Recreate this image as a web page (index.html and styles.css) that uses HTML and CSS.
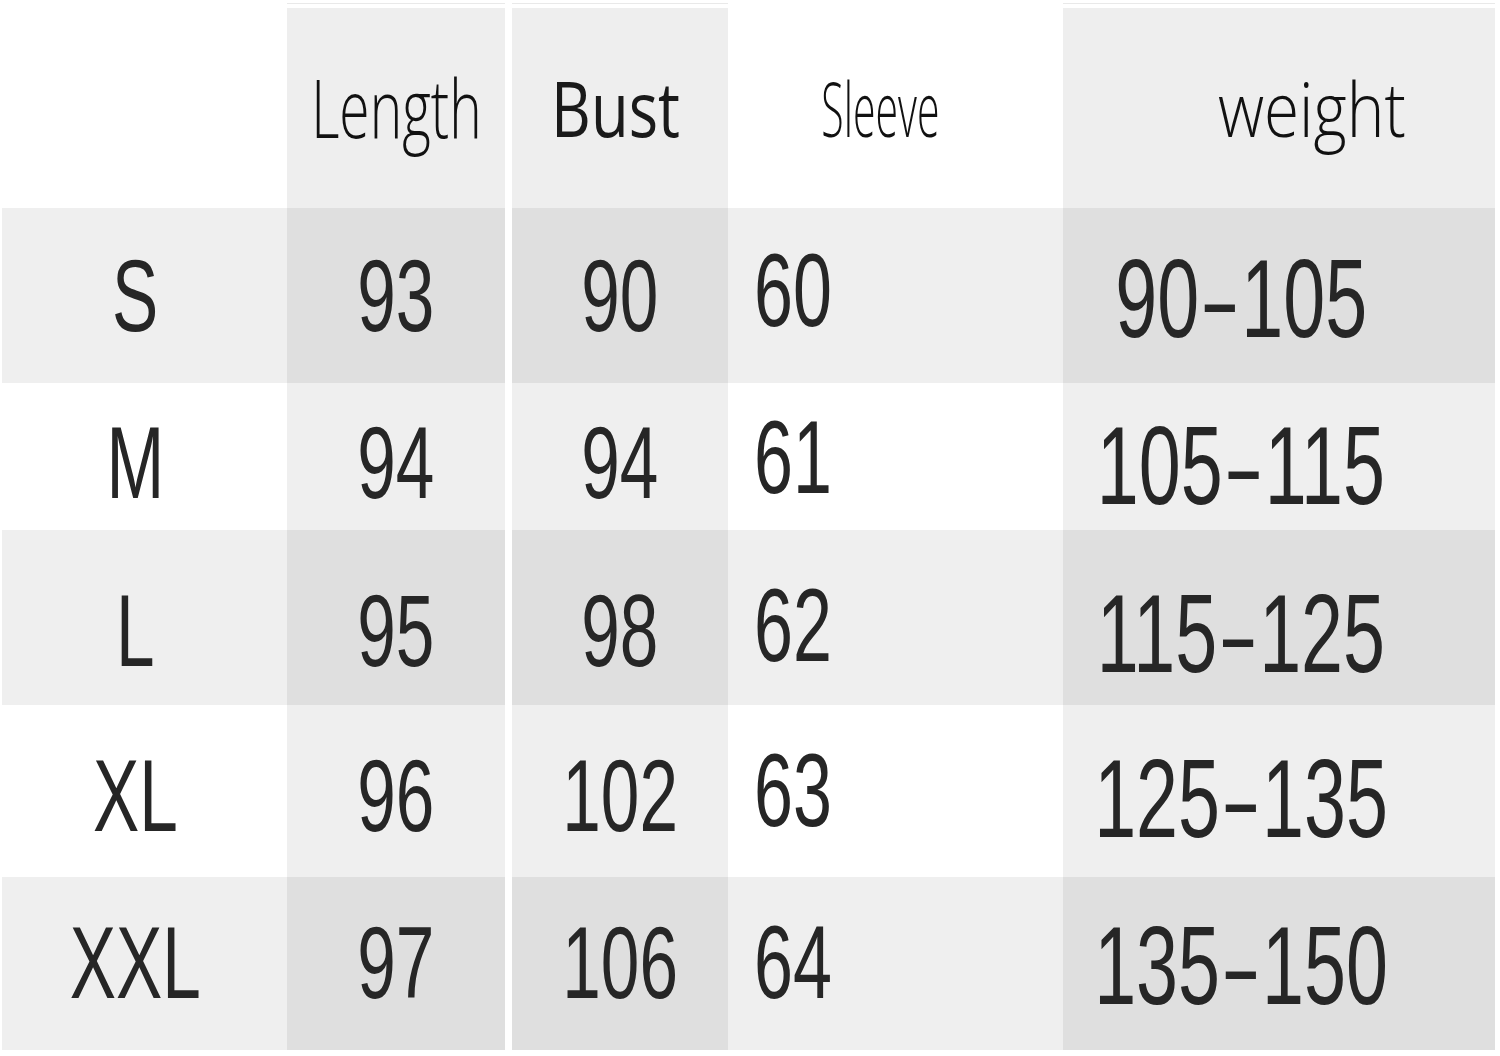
FILE: index.html
```html
<!DOCTYPE html>
<html lang="en">
<head>
<meta charset="utf-8">
<title>Size chart</title>
<link rel="stylesheet" href="styles.css">
</head>
<body>
<div class="chart">
  <div class="row head">
    <div class="cell c-size"></div>
    <div class="cell c-len shade"><span class="h h-len">Length</span></div>
    <div class="gap"></div>
    <div class="cell c-bust shade"><span class="h h-bust">Bust</span></div>
    <div class="cell c-sleeve"><span class="h h-sleeve">Sleeve</span></div>
    <div class="cell c-weight shade"><span class="h h-weight">weight</span></div>
  </div>
  <div class="row band r-s">
    <div class="cell c-size"><span class="v">S</span></div>
    <div class="cell c-len shade"><span class="v">93</span></div>
    <div class="gap"></div>
    <div class="cell c-bust shade"><span class="v">90</span></div>
    <div class="cell c-sleeve"><span class="v">60</span></div>
    <div class="cell c-weight shade"><span class="v w">90<span class="dash">–</span>105</span></div>
  </div>
  <div class="row r-m">
    <div class="cell c-size"><span class="v">M</span></div>
    <div class="cell c-len shade"><span class="v">94</span></div>
    <div class="gap"></div>
    <div class="cell c-bust shade"><span class="v">94</span></div>
    <div class="cell c-sleeve"><span class="v">61</span></div>
    <div class="cell c-weight shade"><span class="v w">105<span class="dash">–</span>115</span></div>
  </div>
  <div class="row band r-l">
    <div class="cell c-size"><span class="v">L</span></div>
    <div class="cell c-len shade"><span class="v">95</span></div>
    <div class="gap"></div>
    <div class="cell c-bust shade"><span class="v">98</span></div>
    <div class="cell c-sleeve"><span class="v">62</span></div>
    <div class="cell c-weight shade"><span class="v w">115<span class="dash">–</span>125</span></div>
  </div>
  <div class="row r-xl">
    <div class="cell c-size"><span class="v">XL</span></div>
    <div class="cell c-len shade"><span class="v">96</span></div>
    <div class="gap"></div>
    <div class="cell c-bust shade"><span class="v">102</span></div>
    <div class="cell c-sleeve"><span class="v">63</span></div>
    <div class="cell c-weight shade"><span class="v w">125<span class="dash">–</span>135</span></div>
  </div>
  <div class="row band r-xxl">
    <div class="cell c-size"><span class="v">XXL</span></div>
    <div class="cell c-len shade"><span class="v">97</span></div>
    <div class="gap"></div>
    <div class="cell c-bust shade"><span class="v">106</span></div>
    <div class="cell c-sleeve"><span class="v">64</span></div>
    <div class="cell c-weight shade"><span class="v w">135<span class="dash">–</span>150</span></div>
  </div>
</div>
</body>
</html>
```
FILE: styles.css
```css
html, body {
  margin: 0;
  padding: 0;
  background: #ffffff;
}

.chart {
  width: 1500px;
  height: 1056px;
  overflow: hidden;
}

.row {
  display: grid;
  grid-template-columns: 285px 218px 7px 216px 335px 432px;
  margin: 0 5px 0 2px;
  background: #ffffff;
  --pt: 37px;
}

.head { height: 208px; }
.r-s { height: 175px; --pt: 37px; }
.r-m { height: 147px; --pt: 29px; }
.r-l { height: 175px; --pt: 50px; }
.r-xl { height: 172px; --pt: 40px; }
.r-xxl { height: 173px; --pt: 35px; }

.band { background: #efefef; }

.gap { background: #ffffff; }

.cell {
  display: flex;
  justify-content: center;
  align-items: flex-start;
  padding-top: var(--pt);
  min-width: 0;
}

.shade { background: #efefef; }
.band .shade { background: #dfdfdf; }

.head .cell { padding-top: 0; }
.head .shade {
  background: linear-gradient(#ffffff 0 3px, #e9e9e9 3px 4px, #ffffff 4px 8px, #eeeeee 8px);
}

.c-size { padding-right: 19px; }
.c-sleeve {
  justify-content: flex-start;
  padding-left: 26px;
  padding-top: calc(var(--pt) - 6px);
}
.r-xxl .c-sleeve { padding-top: calc(var(--pt) - 1px); }
.c-weight { padding-right: 76px; padding-top: calc(var(--pt) - 1px); }

.v {
  display: inline-block;
  font-family: "Liberation Sans", Arial, sans-serif;
  font-size: 102px;
  line-height: 1;
  color: #262626;
  white-space: nowrap;
  transform: scaleX(0.68);
}
.c-sleeve .v { transform-origin: left center; font-size: 103px; }
.v.w { font-size: 111px; transform: scaleX(0.68); }
.dash {
  display: inline-block;
  transform: scaleX(0.72);
}

.h {
  display: inline-block;
  font-family: "Open Sans", "Liberation Sans", sans-serif;
  line-height: 1;
  color: #111111;
  white-space: nowrap;
}
.h-len {
  font-size: 81px;
  font-weight: 300;
  margin-top: 66px;
  transform: scaleX(0.68);
}
.head .c-bust { padding-right: 8px; }
.h-bust {
  font-size: 77px;
  font-weight: 400;
  margin-top: 69px;
  transform: scaleX(0.8);
  color: #1a1a1a;
}
.head .c-sleeve {
  justify-content: center;
  padding-left: 0;
  padding-right: 31px;
  padding-top: 0;
}
.h-sleeve {
  font-size: 76px;
  font-weight: 300;
  margin-top: 70px;
  transform: scaleX(0.54);
}
.head .c-weight { padding-right: 0; padding-left: 66px; padding-top: 0; }
.h-weight {
  font-size: 76px;
  font-weight: 300;
  margin-top: 70px;
  transform: scaleX(0.84);
}
```
